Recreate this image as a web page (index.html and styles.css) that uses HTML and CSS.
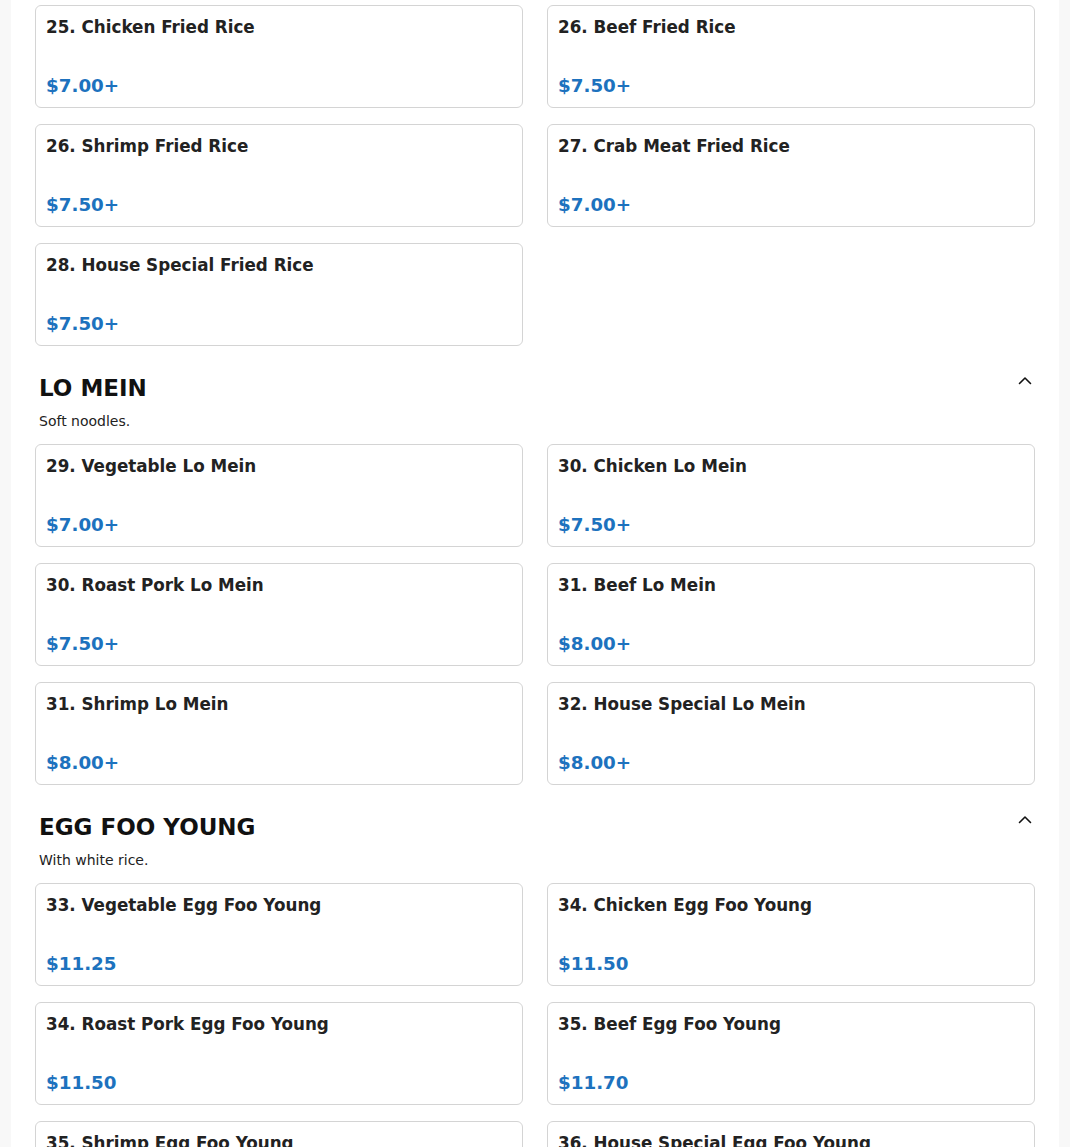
FILE: index.html
```html
<!DOCTYPE html>
<html>
<head>
<meta charset="utf-8">
<link rel="stylesheet" href="styles.css">
</head>
<body>
<div class="page">
  <section class="section first">
    <div class="grid">
      <div class="card"><div class="name">25. Chicken Fried Rice</div><div class="price">$7.00+</div></div>
      <div class="card"><div class="name">26. Beef Fried Rice</div><div class="price">$7.50+</div></div>
      <div class="card"><div class="name">26. Shrimp Fried Rice</div><div class="price">$7.50+</div></div>
      <div class="card"><div class="name">27. Crab Meat Fried Rice</div><div class="price">$7.00+</div></div>
      <div class="card"><div class="name">28. House Special Fried Rice</div><div class="price">$7.50+</div></div>
    </div>
  </section>
  <section class="section">
    <div class="head">
      <h2 class="title">LO MEIN</h2>
      <svg class="chev" width="16" height="16" viewBox="0 0 16 16"><path d="M2.5 10.5 L8 5 L13.5 10.5" fill="none" stroke="#111" stroke-width="1.6" stroke-linecap="round" stroke-linejoin="round"/></svg>
    </div>
    <p class="desc">Soft noodles.</p>
    <div class="grid">
      <div class="card"><div class="name">29. Vegetable Lo Mein</div><div class="price">$7.00+</div></div>
      <div class="card"><div class="name">30. Chicken Lo Mein</div><div class="price">$7.50+</div></div>
      <div class="card"><div class="name">30. Roast Pork Lo Mein</div><div class="price">$7.50+</div></div>
      <div class="card"><div class="name">31. Beef Lo Mein</div><div class="price">$8.00+</div></div>
      <div class="card"><div class="name">31. Shrimp Lo Mein</div><div class="price">$8.00+</div></div>
      <div class="card"><div class="name">32. House Special Lo Mein</div><div class="price">$8.00+</div></div>
    </div>
  </section>
  <section class="section">
    <div class="head">
      <h2 class="title">EGG FOO YOUNG</h2>
      <svg class="chev" width="16" height="16" viewBox="0 0 16 16"><path d="M2.5 10.5 L8 5 L13.5 10.5" fill="none" stroke="#111" stroke-width="1.6" stroke-linecap="round" stroke-linejoin="round"/></svg>
    </div>
    <p class="desc">With white rice.</p>
    <div class="grid">
      <div class="card"><div class="name">33. Vegetable Egg Foo Young</div><div class="price">$11.25</div></div>
      <div class="card"><div class="name">34. Chicken Egg Foo Young</div><div class="price">$11.50</div></div>
      <div class="card"><div class="name">34. Roast Pork Egg Foo Young</div><div class="price">$11.50</div></div>
      <div class="card"><div class="name">35. Beef Egg Foo Young</div><div class="price">$11.70</div></div>
      <div class="card"><div class="name">35. Shrimp Egg Foo Young</div><div class="price">$11.70</div></div>
      <div class="card"><div class="name">36. House Special Egg Foo Young</div><div class="price">$12.00</div></div>
    </div>
  </section>
</div>
</body>
</html>
```
FILE: styles.css
```css
html, body {
  margin: 0;
  padding: 0;
  background: #f8f8f8;
  font-family: "DejaVu Sans", sans-serif;
}
.page {
  margin: 0 11px;
  background: #fff;
  padding: 5px 24px 40px;
  min-height: 1200px;
}
.head {
  display: flex;
  align-items: flex-start;
  justify-content: space-between;
  padding: 0 1px 0 4px;
  margin-top: 27px;
}
.title {
  margin: 0;
  font-size: 23px;
  font-weight: bold;
  line-height: 30px;
  color: #111;
}
.chev {
  margin-top: 0;
  margin-right: 1px;
}
.desc {
  margin: 8px 0 0 4px;
  font-size: 14px;
  line-height: 20px;
  color: #222;
}
.grid {
  display: grid;
  grid-template-columns: 1fr 1fr;
  column-gap: 24px;
  row-gap: 16px;
}
.desc + .grid {
  margin-top: 13px;
}
.card {
  border: 1px solid #d4d4d4;
  border-radius: 6px;
  height: 103px;
  box-sizing: border-box;
  padding: 9px 10px 7px;
  display: flex;
  flex-direction: column;
  justify-content: space-between;
}
.name {
  font-size: 16.75px;
  font-weight: bold;
  color: #222;
  line-height: 24px;
}
.price {
  font-size: 18.3px;
  font-weight: bold;
  color: #1d72be;
  line-height: 24px;
  margin-bottom: 2px;
}
```
